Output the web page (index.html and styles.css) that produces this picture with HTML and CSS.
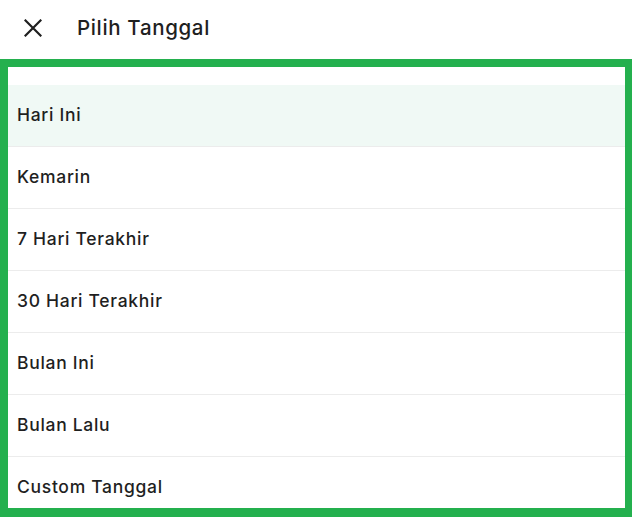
FILE: index.html
```html
<!DOCTYPE html>
<html>
<head>
<meta charset="utf-8">
<link rel="stylesheet" href="styles.css">
</head>
<body>
<div class="page">
  <header class="header">
    <button class="close" aria-label="Tutup">
      <svg width="18" height="18" viewBox="0 0 18 18"><path d="M1.5 1.5 L16.5 16.5 M16.5 1.5 L1.5 16.5" stroke="#1f1f1f" stroke-width="2.2" stroke-linecap="square" fill="none"/></svg>
    </button>
    <h1 class="title">Pilih Tanggal</h1>
  </header>
  <div class="panel">
    <ul class="list">
      <li class="item active">Hari Ini</li>
      <li class="item">Kemarin</li>
      <li class="item">7 Hari Terakhir</li>
      <li class="item">30 Hari Terakhir</li>
      <li class="item">Bulan Ini</li>
      <li class="item">Bulan Lalu</li>
      <li class="item">Custom Tanggal</li>
    </ul>
  </div>
</div>
</body>
</html>
```
FILE: styles.css
```css
* { box-sizing: border-box; }
html, body { margin: 0; padding: 0; }
body {
  width: 632px;
  height: 517px;
  overflow: hidden;
  background: #fff;
  font-family: Inter, "Noto Sans", sans-serif;
  color: #1f1f1f;
}
.page { display: flex; flex-direction: column; height: 517px; }
.header {
  height: 59px;
  display: flex;
  align-items: center;
  padding-left: 24px;
  padding-bottom: 4px;
  flex: none;
}
.close {
  width: 18px;
  height: 18px;
  padding: 0;
  border: 0;
  background: none;
  display: flex;
}
.title {
  margin: 0 0 0 35px;
  font-size: 20.5px;
  font-weight: 500;
  letter-spacing: 0.65px;
}
.panel {
  flex: none;
  height: 458px;
  border: 8px solid #24b04e;
  border-right-width: 7px;
  border-bottom-width: 9px;
  overflow: hidden;
  padding-top: 18px;
}
.list { list-style: none; margin: 0; padding: 0; }
.item {
  height: 62px;
  display: flex;
  align-items: center;
  padding-left: 9px;
  font-size: 17.5px;
  font-weight: 500;
  letter-spacing: 0.7px;
  border-bottom: 1px solid #ececec;
  padding-bottom: 3px;
}
.item.active { background: #f0f9f5; }
```
